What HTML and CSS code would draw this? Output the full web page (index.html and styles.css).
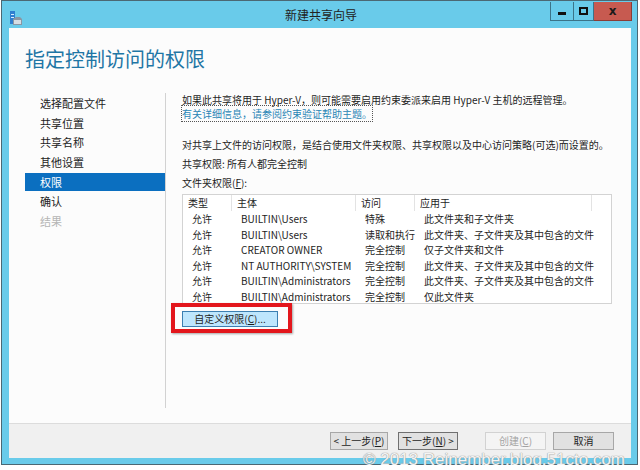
FILE: index.html
```html
<!DOCTYPE html>
<html lang="zh-CN">
<head>
<meta charset="utf-8">
<title>新建共享向导</title>
<link rel="stylesheet" href="styles.css">
</head>
<body>
    <div class="window">
        <div class="titlebar">
            <div class="title_icon">
                <svg width="12" height="15" viewBox="0 0 12 15">
                    <rect x="0" y="0" width="5" height="13" fill="#2f7fd0"/>
                    <rect x="1" y="3" width="3" height="1" fill="#d8ecff"/>
                    <rect x="1" y="6" width="3" height="1" fill="#d8ecff"/>
                    <path d="M3 8 L6 6 L10 6 L12 8 L12 14 L3 14 Z" fill="#8a96a3"/>
                    <rect x="4" y="9" width="7" height="4" fill="#d6dde4"/>
                </svg>
            </div>
            <div class="title_text">新建共享向导</div>
            <div class="caption_buttons">
                <div class="cap_btn cap_min"><span class="min_bar"></span></div>
                <div class="cap_btn cap_max"><span class="max_box"></span></div>
                <div class="cap_btn cap_close">x</div>
            </div>
        </div>

        <div class="client">
            <div class="main">
                <h1 class="page_title">指定控制访问的权限</h1>

                <div class="wizard_body">
                    <ul class="steps">
                        <li class="step">选择配置文件</li>
                        <li class="step">共享位置</li>
                        <li class="step">共享名称</li>
                        <li class="step">其他设置</li>
                        <li class="step current">权限</li>
                        <li class="step">确认</li>
                        <li class="step disabled">结果</li>
                    </ul>

                    <div class="content">
                        <p class="line">如果此共享将用于 Hyper-V，则可能需要启用约束委派来启用 Hyper-V 主机的远程管理。</p>
                        <p class="line"><span class="help_link">有关详细信息，请参阅约束验证帮助主题。</span></p>
                        <p class="line gap_big">对共享上文件的访问权限，是结合使用文件夹权限、共享权限以及中心访问策略(可选)而设置的。</p>
                        <p class="line gap_small">共享权限: 所有人都完全控制</p>
                        <p class="line gap_small">文件夹权限(<u>F</u>):</p>

                        <div class="perm_table">
                            <div class="head_cell">类型</div>
                            <div class="head_cell">主体</div>
                            <div class="head_cell">访问</div>
                            <div class="head_cell">应用于</div>
                            <div class="head_cell last"></div>

                            <div class="cell">允许</div>
                            <div class="cell">BUILTIN\Users</div>
                            <div class="cell">特殊</div>
                            <div class="cell">此文件夹和子文件夹</div>
                            <div class="cell"></div>

                            <div class="cell">允许</div>
                            <div class="cell">BUILTIN\Users</div>
                            <div class="cell">读取和执行</div>
                            <div class="cell">此文件夹、子文件夹及其中包含的文件</div>
                            <div class="cell"></div>

                            <div class="cell">允许</div>
                            <div class="cell">CREATOR OWNER</div>
                            <div class="cell">完全控制</div>
                            <div class="cell">仅子文件夹和文件</div>
                            <div class="cell"></div>

                            <div class="cell">允许</div>
                            <div class="cell">NT AUTHORITY\SYSTEM</div>
                            <div class="cell">完全控制</div>
                            <div class="cell">此文件夹、子文件夹及其中包含的文件</div>
                            <div class="cell"></div>

                            <div class="cell">允许</div>
                            <div class="cell">BUILTIN\Administrators</div>
                            <div class="cell">完全控制</div>
                            <div class="cell">此文件夹、子文件夹及其中包含的文件</div>
                            <div class="cell"></div>

                            <div class="cell">允许</div>
                            <div class="cell">BUILTIN\Administrators</div>
                            <div class="cell">完全控制</div>
                            <div class="cell">仅此文件夹</div>
                            <div class="cell"></div>
                        </div>

                        <div class="custom_wrap">
                            <div class="custom_btn">自定义权限(<u>C</u>)...</div>
                            <div class="red_mark"></div>
                        </div>
                    </div>
                </div>
            </div>

            <div class="footer">
                <div class="btn btn_back">&lt; 上一步(<u>P</u>)</div>
                <div class="btn btn_next">下一步(<u>N</u>) &gt;</div>
                <div class="btn btn_create">创建(<u>C</u>)</div>
                <div class="btn btn_cancel">取消</div>
            </div>
        </div>

        <div class="watermark">© 2013 Reinember.blog.51cto.com</div>
    </div>
</body>
</html>
```

FILE: styles.css
```css
body {
    margin: 0;
    background-color: #ffffff;
    font-family: "Noto Sans CJK SC", "Noto Sans", sans-serif;
    color: #1e1e1e;
}

.window {
    position: relative;
    box-sizing: border-box;
    width: 637px;
    height: 465px;
    margin-left: 1px;
    padding: 0 6px 6px 7px;
    background-color: #69cbea;
    border: 1px solid #4b6874;
}

.titlebar {
    display: grid;
    grid-template-columns: 1fr auto 1fr;
    height: 27px;
    margin: 0 -6px 0 -7px;
    padding: 0 5px 0 8px;
}

.title_icon {
    padding-top: 6px;
}

.title_text {
    font-size: 12px;
    line-height: 28px;
    color: #222;
}

.caption_buttons {
    display: flex;
    justify-content: flex-end;
    align-items: flex-start;
    padding-top: 1px;
}

.cap_btn {
    box-sizing: border-box;
    height: 19px;
    border: 1px solid #3b7489;
    border-top: none;
    display: flex;
    align-items: center;
    justify-content: center;
}

.cap_min {
    width: 23px;
    border-right: none;
}

.min_bar {
    width: 8px;
    height: 3px;
    margin-top: 5px;
    background-color: #111;
}

.cap_max {
    width: 21px;
}

.max_box {
    width: 5px;
    height: 4px;
    border: 2px solid #111;
}

.cap_close {
    width: 38px;
    border: 1px solid #8a3c36;
    border-top: none;
    border-left: none;
    background-color: #c75a50;
    font-family: "DejaVu Sans", sans-serif;
    font-weight: bold;
    font-size: 12px;
    color: #1a1a1a;
    line-height: 16px;
}

.client {
    display: flex;
    flex-direction: column;
    height: 430px;
}

.main {
    flex: 1;
    background-color: #fcfcfc;
    padding: 18px 0 0 16px;
}

.page_title {
    margin: 0;
    font-size: 20px;
    line-height: 26px;
    font-weight: normal;
    color: #1f76a5;
}

.wizard_body {
    display: flex;
    margin-top: 21px;
    height: 315px;
}

.steps {
    list-style: none;
    margin: 0;
    padding: 1px 0 0 0;
    width: 140px;
    border-right: 1px solid #d2d2d2;
}

.step {
    height: 18px;
    line-height: 18px;
    margin-bottom: 1.7px;
    padding-left: 15px;
    font-size: 11px;
    color: #222;
}

.step.current {
    background-color: #0b6fc0;
    color: #ffffff;
}

.step.disabled {
    color: #b5b5b5;
}

.content {
    padding-left: 16px;
    font-size: 10px;
}

.line {
    margin: 0;
    line-height: 14px;
    white-space: nowrap;
}

.gap_big {
    margin-top: 17px;
}

.gap_small {
    margin-top: 5px;
}

.help_link {
    color: #2a86b6;
    outline: 1px dotted #555;
    outline-offset: 0;
}

.perm_table {
    box-sizing: border-box;
    width: 430px;
    height: 110px;
    margin-top: 4px;
    border: 1px solid #d3d3d3;
    background-color: #ffffff;
    display: grid;
    grid-template-columns: 49px 124px 59px 177px 1fr;
    grid-template-rows: 16px;
    grid-auto-rows: 15.6px;
}

.head_cell {
    border-right: 1px solid #e3e3e3;
    padding-left: 5px;
    line-height: 16px;
    white-space: nowrap;
}

.head_cell.last {
    border-right: none;
}

.cell {
    padding-left: 9px;
    line-height: 15.6px;
    white-space: nowrap;
}

.custom_wrap {
    position: relative;
    width: 96px;
    margin-top: 7px;
}

.custom_btn {
    box-sizing: border-box;
    width: 96px;
    height: 16px;
    line-height: 14px;
    text-align: center;
    background-color: #bee6fd;
    border: 1px solid #3c7fb1;
}

.red_mark {
    position: absolute;
    left: -11px;
    right: -14px;
    top: -8px;
    bottom: -6px;
    border: 4px solid #e3161c;
    box-shadow: 1px 1px 2px rgba(0, 0, 0, 0.35);
}

.footer {
    box-sizing: border-box;
    height: 35px;
    border-top: 1px solid #dcdcdc;
    background-color: #f0f0f0;
    display: flex;
    justify-content: flex-end;
    align-items: flex-start;
    padding: 8px 17px 0 0;
    font-size: 10px;
}

.btn {
    box-sizing: border-box;
    height: 18px;
    line-height: 16px;
    text-align: center;
    background-color: #e1e1e1;
    border: 1px solid #a7a7a7;
    color: #1e1e1e;
}

.btn_back {
    width: 58px;
}

.btn_next {
    width: 60px;
    margin-left: 10px;
    border-color: #707070;
}

.btn_create {
    width: 61px;
    margin-left: 27px;
    background-color: #f4f4f4;
    border-color: #d2d2d2;
    color: #a3a3a3;
}

.btn_cancel {
    width: 61px;
    margin-left: 7px;
}

.watermark {
    position: absolute;
    right: 12px;
    top: 448px;
    font-family: "Liberation Sans", sans-serif;
    font-size: 17px;
    line-height: 22px;
    color: #f4f4f4;
    text-shadow: 0 0 1px #8c8c8c, 0 0 1px #a0a0a0;
    white-space: nowrap;
}
```
